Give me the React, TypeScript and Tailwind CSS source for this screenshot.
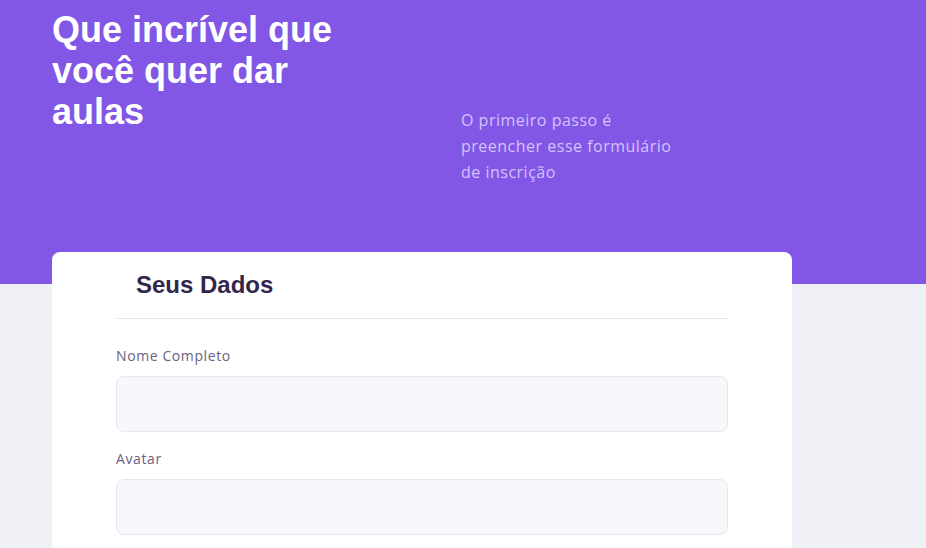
const bodyFont = { fontFamily: '"Open Sans", "Noto Sans", sans-serif' };

function Field({ label }: { label: string }) {
  return (
    <div className="flex flex-col">
      <label
        className="mb-[10px] text-[14px] leading-[20px] tracking-[0.6px] text-[#6a6180]"
        style={bodyFont}
      >
        {label}
      </label>
      <input
        type="text"
        className="h-[56px] w-full rounded-lg border border-[#e6e6f0] bg-[#f8f8fc] px-4 outline-none"
      />
    </div>
  );
}

export default function App() {
  return (
    <div className="min-h-screen bg-[#f0f0f7]">
      {/* Header */}
      <header className="h-[284px] bg-[#8257e5] px-[52px] pt-[9px]">
        <div className="flex items-start">
          <h1 className="w-[320px] font-['Liberation_Sans',Arial,sans-serif] text-[36px] font-bold leading-[41px] text-white">
            Que incrível que você quer dar aulas
          </h1>
          <p
            className="ml-[89px] mt-[98px] text-[16px] leading-[26px] tracking-[0.5px] text-[#d4c2ff]"
            style={bodyFont}
          >
            O primeiro passo é
            <br />
            preencher esse formulário
            <br />
            de inscrição
          </p>
        </div>
      </header>

      {/* Form card */}
      <main className="-mt-[32px] px-[52px] pb-16">
        <div className="w-[740px] rounded-lg bg-white px-16 pt-[17px] pb-16">
          <fieldset>
            <legend className="w-full border-b border-[#e6e6f0] pb-[17px] pl-5 font-['Liberation_Sans',Arial,sans-serif] text-[24px] font-bold leading-[32px] text-[#32264d]">
              Seus Dados
            </legend>
            <div className="mt-[27px] flex flex-col gap-[17px]">
              <Field label="Nome Completo" />
              <Field label="Avatar" />
            </div>
          </fieldset>
        </div>
      </main>
    </div>
  );
}
